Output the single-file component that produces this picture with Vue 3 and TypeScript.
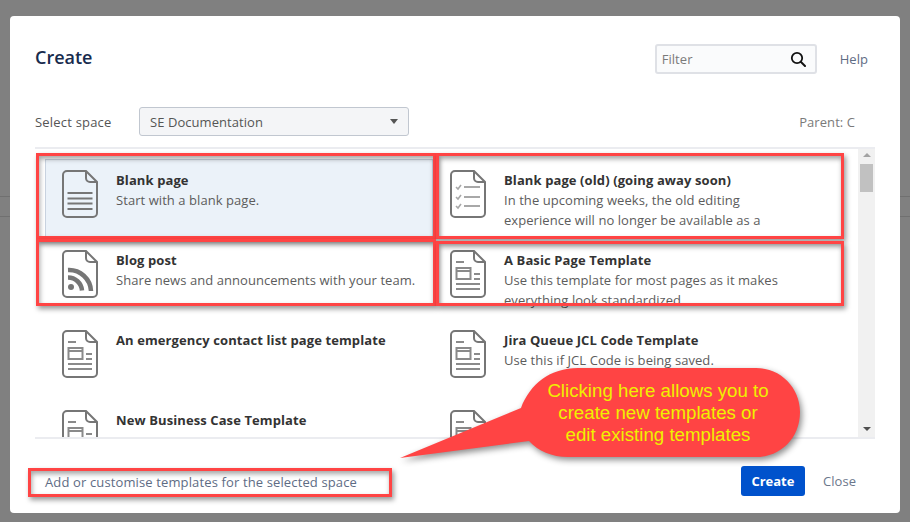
<script setup lang="ts">
type IconKind = 'lines' | 'checks' | 'rss' | 'layout'

interface Blueprint {
  title?: string
  desc?: string
  icon: IconKind
  selected?: boolean
}

const blueprints: Blueprint[] = [
  { title: 'Blank page', desc: 'Start with a blank page.', icon: 'lines', selected: true },
  {
    title: 'Blank page (old) (going away soon)',
    desc: 'In the upcoming weeks, the old editing experience will no longer be available as a',
    icon: 'checks',
  },
  { title: 'Blog post', desc: 'Share news and announcements with your team.', icon: 'rss' },
  {
    title: 'A Basic Page Template',
    desc: 'Use this template for most pages as it makes everything look standardized',
    icon: 'layout',
  },
  { title: 'An emergency contact list page template', icon: 'layout' },
  { title: 'Jira Queue JCL Code Template', desc: 'Use this if JCL Code is being saved.', icon: 'layout' },
  { title: 'New Business Case Template', icon: 'layout' },
  // title sits under the callout in the screenshot, can't be read
  { icon: 'layout' },
]
</script>

<template>
  <div class="backdrop">
    <div class="dialog">
      <header class="head">
        <h1 class="title">Create</h1>
        <div class="head-right">
          <div class="filter">
            <span class="filter-text">Filter</span>
            <svg class="search" viewBox="0 0 16 16" width="16" height="16">
              <circle cx="7" cy="7" r="5.2" fill="none" stroke="#111" stroke-width="1.8" />
              <path d="M11 11l4 4" stroke="#111" stroke-width="2" stroke-linecap="round" />
            </svg>
          </div>
          <a class="help">Help</a>
        </div>
      </header>

      <div class="space-row">
        <span class="space-label">Select space</span>
        <div class="space-select">
          <span>SE Documentation</span>
          <i class="caret"></i>
        </div>
        <span class="parent">Parent: C</span>
      </div>

      <div class="list-wrap">
        <div class="grid">
          <div
            v-for="(item, i) in blueprints"
            :key="i"
            class="item"
            :class="{ selected: item.selected }"
          >
            <svg class="doc" viewBox="0 0 36 48" width="36" height="48">
              <path
                d="M5 1H24L35 12V43a4 4 0 0 1-4 4H5a4 4 0 0 1-4-4V5a4 4 0 0 1 4-4Z"
                fill="none"
                stroke="#767676"
                stroke-width="2"
              />
              <path d="M24 1V8a4 4 0 0 0 4 4H35" fill="none" stroke="#767676" stroke-width="2" />
              <g v-if="item.icon === 'lines'" stroke="#767676" stroke-width="2">
                <path d="M5.500 23H30.500M5.500 28.500H30.500M5.500 33.500H30.500M5.500 39H30.500" />
              </g>
              <g v-else-if="item.icon === 'checks'" fill="none" stroke="#a8a8a8" stroke-width="2">
                <path d="M14 17H30M14 27H30M14 36H30" />
                <path d="M6 17l2 2 3-4M6 27l2 2 3-4M6 36l2 2 3-4" stroke-width="1.600" />
              </g>
              <g v-else-if="item.icon === 'rss'">
                <circle cx="9" cy="37" r="3" fill="#767676" />
                <path d="M6 27.500a14 14 0 0 1 14 13" fill="none" stroke="#767676" stroke-width="4.500" />
                <path d="M6 20a22 22 0 0 1 23 21" fill="none" stroke="#767676" stroke-width="4.500" />
              </g>
              <g v-else fill="none" stroke="#8a8a8a" stroke-width="2">
                <path d="M6 12H14" />
                <rect x="6.500" y="18" width="14" height="11" />
                <path d="M6 21H20" />
                <path d="M24 24H30M24 29H30M6 34H30M6 39H30" />
              </g>
            </svg>
            <div class="item-text">
              <div v-if="item.title" class="item-title">{{ item.title }}</div>
              <div v-if="item.desc" class="item-desc">{{ item.desc }}</div>
            </div>
          </div>
        </div>
        <div class="scrollbar">
          <i class="arrow up"></i>
          <div class="thumb"></div>
          <i class="arrow down"></i>
        </div>
      </div>

      <footer class="foot">
        <a class="foot-link">Add or customise templates for the selected space</a>
        <div class="foot-actions">
          <button class="btn-create" type="button">Create</button>
          <a class="close">Close</a>
        </div>
      </footer>
    </div>

    <!-- annotations drawn on top of the screenshot -->
    <div class="mark mark-a"></div>
    <div class="mark mark-b"></div>
    <div class="mark mark-c"></div>
    <div class="mark mark-d"></div>
    <div class="mark mark-e"></div>

    <svg class="callout" viewBox="0 0 910 522" width="910" height="522">
      <path
        d="M400 458L521 408C530 384 550 368 578 368H756C781 368 800 388 800 412C800 438 781 457 756 457H568C552 457 538 451 529 441Z"
        fill="#ff4444"
      />
    </svg>
    <div class="callout-text">
      Clicking here allows you to<br />create new templates or<br />edit existing templates
    </div>
  </div>
</template>

<style scoped>
.backdrop {
  position: relative;
  width: 910px;
  height: 522px;
  box-sizing: border-box;
  padding: 16px 10px 9px;
  overflow: hidden;
  background:
    linear-gradient(#707070, #707070) 0 196px / 100% 1px no-repeat,
    linear-gradient(#707070, #707070) 0 216px / 100% 1px no-repeat,
    #808080;
  font-family: 'Open Sans', 'Noto Sans', sans-serif;
  letter-spacing: 0.06px;
}

.dialog {
  height: 100%;
  display: flex;
  flex-direction: column;
  background: #fff;
  border-radius: 4px;
  padding: 0 25px;
  box-sizing: border-box;
}

.head {
  display: flex;
  justify-content: space-between;
  align-items: center;
  height: 85px;
  flex: none;
}

.title {
  margin: 0;
  font-size: 18px;
  font-weight: 600;
  letter-spacing: 0;
  color: #172b4d;
  position: relative;
  top: -2px;
}

.head-right {
  display: flex;
  align-items: center;
  gap: 23px;
  padding-right: 7px;
}

.filter {
  width: 162px;
  height: 30px;
  box-sizing: border-box;
  border: 2px solid #dfe1e6;
  border-radius: 3px;
  background: #fafbfc;
  display: flex;
  align-items: center;
  justify-content: space-between;
  padding: 0 9px 0 5px;
}

.filter-text {
  font-size: 13px;
  color: #7a7a7a;
}

.help {
  font-size: 13px;
  color: #5e6c84;
}

.space-row {
  display: flex;
  align-items: center;
  height: 29px;
  margin-top: 6px;
  flex: none;
  padding-right: 20px;
}

.space-label {
  width: 104px;
  font-size: 13px;
  letter-spacing: 0.2px;
  color: #555;
}

.space-select {
  width: 270px;
  height: 29px;
  box-sizing: border-box;
  border: 1px solid #c1c7d0;
  border-radius: 3px;
  background: #f4f5f7;
  display: flex;
  align-items: center;
  justify-content: space-between;
  padding: 0 10px;
  font-size: 13px;
  color: #555;
}

.caret {
  border: 4px solid transparent;
  border-top: 5px solid #555;
  border-bottom: 0;
}

.parent {
  margin-left: auto;
  font-size: 13px;
  color: #7a7a7a;
}

.list-wrap {
  display: flex;
  height: 292px;
  margin-top: 11px;
  border-top: 2px solid #ebecf0;
  border-bottom: 2px solid #ebecf0;
  box-sizing: border-box;
  overflow: hidden;
  flex: none;
}

.grid {
  flex: 1;
  display: grid;
  grid-template-columns: 388px 388px;
  grid-auto-rows: 80px;
  padding: 10px 0 0 10px;
  overflow: hidden;
}

.item {
  display: flex;
  box-sizing: border-box;
  padding: 11px 16px 0 17px;
  gap: 18px;
  overflow: hidden;
}

.item.selected {
  background: #ebf2f9;
  border: 1px solid #c9d3e0;
  padding: 10px 15px 0 16px;
}

.doc {
  flex: none;
}

.item-title {
  font-size: 13px;
  font-weight: 700;
  line-height: 20px;
  letter-spacing: 0.1px;
  color: #333;
}

.item-desc {
  font-size: 13px;
  line-height: 20px;
  color: #5c5c5c;
}

.scrollbar {
  width: 17px;
  flex: none;
  background: #f1f1f1;
  display: flex;
  flex-direction: column;
  align-items: center;
}

.thumb {
  width: 13px;
  height: 28px;
  background: #c1c1c1;
  margin-top: 7px;
}

.arrow {
  border: 4px solid transparent;
}

.arrow.up {
  border-top: 0;
  border-bottom: 4px solid #a3a3a3;
  margin-top: 4px;
}

.arrow.down {
  border-bottom: 0;
  border-top: 4px solid #505050;
  margin-top: auto;
  margin-bottom: 6px;
}

.foot {
  flex: 1;
  display: flex;
  align-items: center;
  justify-content: space-between;
  padding: 10px 19px 0 10px;
}

.foot-link {
  padding-top: 2px;
  font-size: 13px;
  letter-spacing: 0.13px;
  color: #5e6c84;
}

.foot-actions {
  display: flex;
  align-items: center;
  gap: 18px;
}

.btn-create {
  width: 64px;
  height: 30px;
  border: 0;
  border-radius: 3px;
  background: #0052cc;
  color: #fff;
  font-family: inherit;
  font-size: 13px;
  font-weight: 700;
}

.close {
  font-size: 13px;
  color: #6b778c;
}

.mark {
  position: absolute;
  box-sizing: border-box;
  border: 3px solid #ff4444;
  box-shadow:
    2px 3px 5px rgba(0, 0, 0, 0.4),
    inset 1px 3px 5px rgba(0, 0, 0, 0.35);
}

.mark-a { left: 36px; top: 153px; width: 400px; height: 86px; }
.mark-b { left: 436px; top: 153px; width: 408px; height: 86px; }
.mark-c { left: 36px; top: 239px; width: 400px; height: 67px; }
.mark-d { left: 436px; top: 241px; width: 408px; height: 65px; }
.mark-e { left: 28px; top: 468px; width: 364px; height: 29px; }

.callout {
  position: absolute;
  left: 0;
  top: 0;
  filter: drop-shadow(2px 3px 3px rgba(0, 0, 0, 0.45));
}

.callout-text {
  position: absolute;
  left: 519px;
  top: 380px;
  width: 278px;
  text-align: center;
  font-family: 'Liberation Sans', Arial, sans-serif;
  font-size: 18.700px;
  line-height: 22px;
  letter-spacing: 0;
  color: #f0f000;
}
</style>
